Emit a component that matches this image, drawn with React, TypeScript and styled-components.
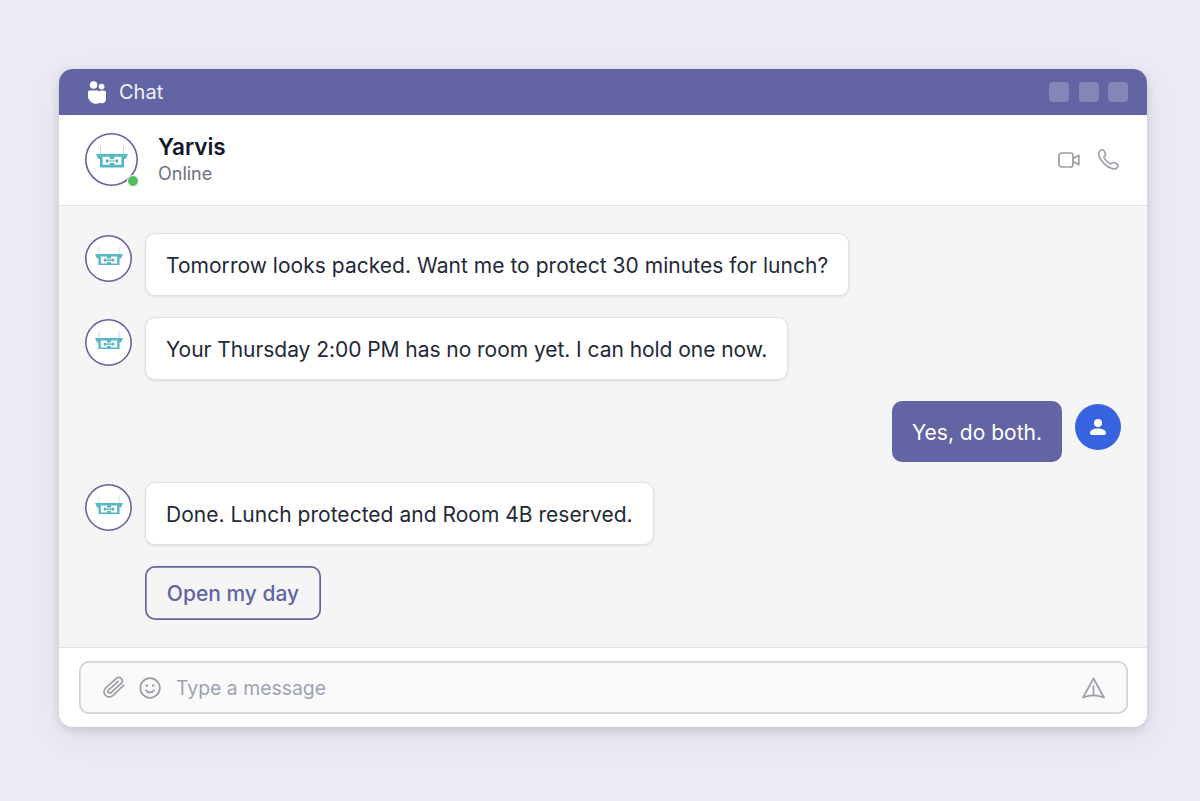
import React from 'react';
import styled, { createGlobalStyle } from 'styled-components';

const GlobalStyle = createGlobalStyle`
  html, body { margin: 0; padding: 0; }
  body {
    width: 1200px;
    height: 801px;
    overflow: hidden;
    background: #ecebf4;
    font-family: Inter, "Liberation Sans", sans-serif;
    -webkit-font-smoothing: antialiased;
  }
`;

const Page = styled.div`
  height: 801px;
  padding: 69px 53px 0 59px;
  box-sizing: border-box;
`;

const Window = styled.div`
  height: 658px;
  display: flex;
  flex-direction: column;
  background: #fff;
  border-radius: 14px;
  overflow: hidden;
  box-shadow: 0 3px 8px rgba(50, 50, 80, 0.16), 0 10px 30px rgba(70, 70, 110, 0.09);
`;

const TitleBar = styled.div`
  height: 46px;
  flex: none;
  display: flex;
  align-items: center;
  padding: 0 19px 0 29px;
  background: #6264a3;
  color: #fff;
`;

const TitleText = styled.span`
  margin-left: 13px;
  font-size: 20px;
  font-weight: 400;
  color: #f1f1f8;
`;

const WindowButtons = styled.div`
  margin-left: auto;
  display: flex;
  gap: 9.5px;
`;

const WindowButton = styled.span`
  width: 20px;
  height: 20px;
  border-radius: 4px;
  background: rgba(255, 255, 255, 0.22);
`;

const Header = styled.div`
  height: 91px;
  flex: none;
  box-sizing: border-box;
  display: flex;
  align-items: center;
  padding: 0 27px 1px 26px;
  border-bottom: 1px solid #e2e3e6;
`;

const AvatarWrap = styled.div`
  position: relative;
  width: 53px;
  height: 53px;
  flex: none;
`;

const AvatarRing = styled.div<{ $size: number }>`
  width: ${p => p.$size}px;
  height: ${p => p.$size}px;
  flex: none;
  display: flex;
  align-items: center;
  justify-content: center;
  border-radius: 50%;
  background: #fff;
  box-shadow: inset 0 0 0 1.6px #6264a3;
`;

const StatusDot = styled.span`
  position: absolute;
  right: -1px;
  bottom: -1px;
  width: 10px;
  height: 10px;
  border-radius: 50%;
  border: 1px solid #fff;
  background: #54bd60;
`;

const HeaderInfo = styled.div`
  margin-left: 20px;
  display: flex;
  flex-direction: column;
`;

const Name = styled.span`
  font-size: 22.5px;
  line-height: 28px;
  font-weight: 600;
  color: #111827;
`;

const Status = styled.span`
  font-size: 18px;
  line-height: 26px;
  color: #6b7280;
`;

const HeaderActions = styled.div`
  margin-left: auto;
  display: flex;
  align-items: center;
  gap: 17px;
  color: #9a9ea6;
`;

const Messages = styled.div`
  flex: 1;
  display: flex;
  flex-direction: column;
  padding: 27px 26px 0;
  background: #f5f5f6;
`;

const Row = styled.div<{ $gap?: number }>`
  display: flex;
  align-items: flex-start;
  gap: 13px;
  margin-bottom: ${p => p.$gap ?? 21}px;
`;

const UserRow = styled(Row)`
  justify-content: flex-end;
`;

const AgentAvatarSlot = styled.div`
  padding-top: 2px;
  flex: none;
`;

const Bubble = styled.div<{ $tracking?: number }>`
  box-sizing: border-box;
  height: 63px;
  display: flex;
  align-items: center;
  padding: 2px 20px 0;
  background: #fff;
  border: 1px solid #dfe0e4;
  border-radius: 10px;
  box-shadow: 0 1px 3px rgba(30, 30, 60, 0.1);
  font-size: 21px;
  letter-spacing: ${p => p.$tracking ?? 0}px;
  color: #1f2937;
  white-space: nowrap;
`;

const UserBubble = styled.div`
  box-sizing: border-box;
  height: 61px;
  display: flex;
  align-items: center;
  padding: 2px 20px 0;
  background: #6264a3;
  border-radius: 10px;
  font-size: 21px;
  color: #fff;
  white-space: nowrap;
`;

const UserAvatar = styled.div`
  width: 46px;
  height: 46px;
  margin-top: 3px;
  flex: none;
  display: flex;
  align-items: center;
  justify-content: center;
  border-radius: 50%;
  background: #3763e0;
`;

const ActionButton = styled.button`
  width: 176px;
  height: 54px;
  margin-left: 60px;
  padding: 0;
  background: transparent;
  border: none;
  box-shadow: inset 0 0 0 1.7px #6264a3;
  border-radius: 10px;
  font-family: inherit;
  font-size: 21px;
  font-weight: 450;
  color: #6264a3;
`;

const Composer = styled.div`
  height: 80px;
  flex: none;
  box-sizing: border-box;
  padding: 13px 19px 0 20px;
  border-top: 1px solid #e2e3e6;
  background: #fff;
`;

const InputBox = styled.div`
  height: 53px;
  display: flex;
  align-items: center;
  padding: 0 23px;
  background: #fafafa;
  border-radius: 10px;
  box-shadow: inset 0 0 0 1.7px #d0d4da;
  color: #9a9ea6;
`;

const EmojiSlot = styled.span`
  display: flex;
  margin-left: 13px;
`;

const Placeholder = styled.span`
  margin-left: 15px;
  font-size: 19.4px;
  color: #9ca3af;
`;

const SendSlot = styled.span`
  display: flex;
  margin-left: auto;
`;

const LogoSvg = styled.svg`
  margin-bottom: 5px;
`;

const PeopleIcon = () => (
  <svg width="18" height="23" viewBox="0 0 18 23" fill="#fff">
    <circle cx="5.6" cy="4" r="3.8" />
    <circle cx="13.6" cy="5.6" r="2.9" />
    <path d="M0 11.2C0 10 .8 9.4 2 9.4h7.4c1 0 1.6.5 1.9 1.3.4-.8 1-1.2 1.9-1.2H16c1.2 0 2 .8 2 2v6.8a4 4 0 0 1-6 3.4 5.8 5.8 0 0 1-3.4 1.1C3.8 22.8 0 19 0 15.2z" />
  </svg>
);

const YarvisLogo = ({ width }: { width: number }) => (
  <LogoSvg width={width} height={(width * 21.5) / 32} viewBox="0 0 32 21.5" fill="none">
    <path d="M4.5 0v8M27.5 0v8" stroke="#c9d6de" strokeWidth="1" />
    <path d="M0 8h4.500v5H2.300zM32 8h-4.500v5h2.200z" fill="#56b7c7" />
    <path d="M15 13V9.400H5.300v10.700H15V17M17 13V9.400h9.700v10.700H17V17" stroke="#56b7c7" strokeWidth="2.700" />
    <path d="M10 15h12M10 15l2-1.800M10 15l2 1.800M22 15l-2-1.800M22 15l-2 1.800" stroke="#4aa9ba" strokeWidth="1.200" />
  </LogoSvg>
);

const VideoIcon = () => (
  <svg width="22" height="16" viewBox="0 0 22 16" fill="none" stroke="currentColor" strokeWidth="1.7" strokeLinejoin="round">
    <rect x="1" y="1" width="14" height="14" rx="2.5" />
    <path d="M15 6.5l5.800-3.300v9.600L15 9.500" />
  </svg>
);

const PhoneIcon = () => (
  <svg width="23" height="23" viewBox="0 0 24 24" fill="none" stroke="currentColor" strokeWidth="1.7" strokeLinejoin="round" strokeLinecap="round">
    <path d="M2.5 3.6C3.4 2.4 5 1.6 6.4 2c.8.3 2.5 3.8 2.5 4.8 0 1-1.7 1.9-1.7 2.9 0 1.8 5.2 7 7 7 1 0 1.900-1.600 2.900-1.600 1.200 0 4.600 1.800 4.800 2.600.3 1.500-.6 3-1.700 3.700-1 .6-2.600.6-4 .2C10 20 3.600 13.600 2 8 1.700 6.600 1.800 4.800 2.500 3.600z" />
  </svg>
);

const UserIcon = () => (
  <svg width="18" height="18" viewBox="0 0 18 18" fill="#fff">
    <circle cx="9" cy="5" r="4" />
    <path d="M1 15c0-3 3.6-4.600 8-4.600s8 1.600 8 4.600c0 1.200-.8 2-2 2H3c-1.200 0-2-.8-2-2z" />
  </svg>
);

const ClipIcon = () => (
  <svg width="24" height="24" viewBox="0 0 24 24" fill="none" stroke="currentColor" strokeWidth="1.7" strokeLinecap="round" strokeLinejoin="round">
    <path d="M21.4 8.6 11.3 19.6a5.2 5.2 0 0 1-7.6-7.1L14 1.9a3.5 3.5 0 0 1 5 4.8L9.2 17a1.7 1.7 0 0 1-2.5-2.4l9-9.4" transform="rotate(4 12 12)" />
  </svg>
);

const SmileIcon = () => (
  <svg width="22" height="22" viewBox="0 0 22 22" fill="none" stroke="currentColor" strokeWidth="1.7" strokeLinecap="round">
    <circle cx="11" cy="11" r="9.8" />
    <path d="M7 13.200c1 1.500 2.400 2.200 4 2.200s3-.7 4-2.200" />
    <circle cx="7.8" cy="8.6" r="0.5" />
    <circle cx="14.2" cy="8.6" r="0.5" />
  </svg>
);

const SendIcon = () => (
  <svg width="23" height="22" viewBox="0 0 23 22" fill="none" stroke="currentColor" strokeWidth="1.7" strokeLinejoin="round" strokeLinecap="round">
    <path d="M11.5 1.5 22 20.500c-3.400-1.400-7-2.200-10.500-2.200S4.400 19.100 1 20.500z" />
    <path d="M11.5 9v9.300" />
  </svg>
);

const AgentAvatar = () => (
  <AgentAvatarSlot>
    <AvatarRing $size={47}>
      <YarvisLogo width={28} />
    </AvatarRing>
  </AgentAvatarSlot>
);

export default function App() {
  return (
    <Page>
      <GlobalStyle />
      <Window>
        <TitleBar>
          <PeopleIcon />
          <TitleText>Chat</TitleText>
          <WindowButtons>
            <WindowButton />
            <WindowButton />
            <WindowButton />
          </WindowButtons>
        </TitleBar>
        <Header>
          <AvatarWrap>
            <AvatarRing $size={53}>
              <YarvisLogo width={32} />
            </AvatarRing>
            <StatusDot />
          </AvatarWrap>
          <HeaderInfo>
            <Name>Yarvis</Name>
            <Status>Online</Status>
          </HeaderInfo>
          <HeaderActions>
            <VideoIcon />
            <PhoneIcon />
          </HeaderActions>
        </Header>
        <Messages>
          <Row>
            <AgentAvatar />
            <Bubble $tracking={0.03}>Tomorrow looks packed. Want me to protect 30 minutes for lunch?</Bubble>
          </Row>
          <Row>
            <AgentAvatar />
            <Bubble $tracking={-0.05}>Your Thursday 2:00 PM has no room yet. I can hold one now.</Bubble>
          </Row>
          <UserRow $gap={20}>
            <UserBubble>Yes, do both.</UserBubble>
            <UserAvatar>
              <UserIcon />
            </UserAvatar>
          </UserRow>
          <Row>
            <AgentAvatar />
            <Bubble $tracking={0.02}>Done. Lunch protected and Room 4B reserved.</Bubble>
          </Row>
          <ActionButton>Open my day</ActionButton>
        </Messages>
        <Composer>
          <InputBox>
            <ClipIcon />
            <EmojiSlot>
              <SmileIcon />
            </EmojiSlot>
            <Placeholder>Type a message</Placeholder>
            <SendSlot>
              <SendIcon />
            </SendSlot>
          </InputBox>
        </Composer>
      </Window>
    </Page>
  );
}
